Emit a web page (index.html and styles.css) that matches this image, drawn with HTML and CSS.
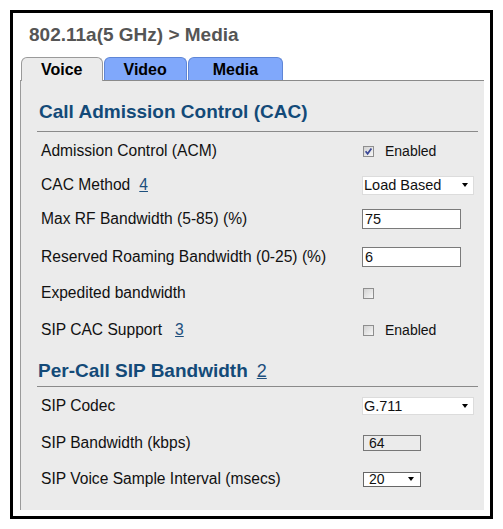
FILE: index.html
```html
<!DOCTYPE html>
<html>
<head>
<meta charset="utf-8">
<link rel="stylesheet" href="styles.css">
</head>
<body>
<div class="frame">
  <h1 class="title">802.11a(5 GHz) &gt; Media</h1>
  <div class="tabs">
    <div class="tab active">Voice</div>
    <div class="tab">Video</div>
    <div class="tab wide">Media</div>
  </div>
  <div class="panel">
    <div class="section-head">Call Admission Control (CAC)</div>
    <div class="grid cac">
      <div class="label">Admission Control (ACM)</div>
      <div class="ctrl">
        <span class="cb"><svg width="9" height="9" viewBox="0 0 9 9"><path d="M1.6 4.2 L3.6 6.8 L7.4 1.4" fill="none" stroke="#3a4796" stroke-width="1.7"/></svg></span>
        <span class="cb-text">Enabled</span>
      </div>

      <div class="label">CAC Method<a class="ref">4</a></div>
      <div class="ctrl"><div class="select">Load Based<span class="arrow"></span></div></div>

      <div class="label">Max RF Bandwidth (5-85) (%)</div>
      <div class="ctrl"><div class="text-input">75</div></div>

      <div class="label">Reserved Roaming Bandwidth (0-25) (%)</div>
      <div class="ctrl"><div class="text-input">6</div></div>

      <div class="label">Expedited bandwidth</div>
      <div class="ctrl"><span class="cb"></span></div>

      <div class="label">SIP CAC Support<a class="ref far">3</a></div>
      <div class="ctrl"><span class="cb"></span><span class="cb-text">Enabled</span></div>
    </div>

    <div class="section-head second">Per-Call SIP Bandwidth<a class="ref big">2</a></div>
    <div class="grid sip">
      <div class="label">SIP Codec</div>
      <div class="ctrl"><div class="select codec">G.711<span class="arrow"></span></div></div>

      <div class="label">SIP Bandwidth (kbps)</div>
      <div class="ctrl"><div class="readonly">64</div></div>

      <div class="label">SIP Voice Sample Interval (msecs)</div>
      <div class="ctrl"><div class="small-select">20<span class="arrow small"></span></div></div>
    </div>
  </div>
</div>
</body>
</html>
```
FILE: styles.css
```css
body {
  margin: 0;
  background: #fff;
  font-family: "Liberation Sans", Arial, sans-serif;
}

.frame {
  margin: 10px;
  width: 483px;
  height: 509px;
  box-sizing: border-box;
  border: 3px solid #000;
  display: flex;
  flex-direction: column;
  padding: 11px 6px 6px 7px;
}

.title {
  margin: 0 0 0 9px;
  font-size: 19px;
  line-height: 22px;
  font-weight: bold;
  color: #555;
}

.tabs {
  display: flex;
  align-items: flex-start;
  margin: 11px 0 -1px 1px;
  position: relative;
  z-index: 1;
}

.tab {
  height: 22px;
  line-height: 23px;
  border: 1px solid #5f86d6;
  border-bottom: none;
  border-radius: 6px 6px 0 0;
  background: #80a8fb;
  padding: 0 19px;
  font-size: 16px;
  font-weight: bold;
  color: #000;
  margin-right: 1px;
}

.tab.active {
  height: 23px;
  background: #ebebeb;
  border-color: #9a9a9a;
}

.tab.wide {
  padding: 0 24px;
}

.panel {
  flex: 1;
  background: #ebebeb;
  border-top: 1px solid #8a8a8a;
  border-left: 1px solid #9a9a9a;
  padding: 20px 6px 0 16px;
}

.section-head {
  font-size: 19px;
  line-height: 22px;
  font-weight: bold;
  color: #134a78;
  padding: 0 0 8px 2px;
  border-bottom: 1px solid #8a8a8a;
}

.section-head.second {
  margin-top: 11px;
  padding: 0 0 4px 1px;
}

.grid {
  display: grid;
  grid-template-columns: 325px 1fr;
}

.cac {
  grid-template-rows: 38px 30px 38px 37px 36px 38px;
}

.sip {
  grid-template-rows: 38px 36px 36px;
}

.label {
  padding-left: 4px;
  font-size: 15.6px;
  color: #111;
  display: flex;
  align-items: center;
}

.ctrl {
  display: flex;
  align-items: center;
  color: #111;
}

.ref {
  color: #1d4f7d;
  text-decoration: underline;
  margin-left: 9px;
}

.ref.far {
  margin-left: 13px;
}

.ref.big {
  font-weight: normal;
  font-size: 18px;
  margin-left: 9px;
}

.cb {
  width: 11px;
  height: 11px;
  box-sizing: border-box;
  border: 1px solid #8e8e8e;
  background: linear-gradient(135deg, #d2d2d2, #f7f7f7);
  margin-left: 1px;
  display: inline-flex;
  align-items: center;
  justify-content: center;
}

.cb-text {
  margin-left: 11px;
  font-size: 14px;
}

.select {
  width: 112px;
  height: 19px;
  box-sizing: border-box;
  border: 1px solid #dcdcdc;
  background: #fff;
  display: flex;
  align-items: center;
  padding-left: 1px;
  font-size: 14.5px;
}

.select.codec {
  height: 18px;
}

.arrow {
  margin-left: auto;
  margin-right: 5px;
  width: 0;
  height: 0;
  border-left: 3.5px solid transparent;
  border-right: 3.5px solid transparent;
  border-top: 4px solid #000;
}

.arrow.small {
  margin-right: 6px;
}

.text-input {
  width: 99px;
  height: 20px;
  box-sizing: border-box;
  border: 1px solid #7a7a7a;
  background: #fff;
  padding-left: 2px;
  font-size: 14.5px;
  display: flex;
  align-items: center;
}

.readonly {
  width: 58px;
  height: 16px;
  box-sizing: border-box;
  margin-left: 1px;
  border: 1px solid #777;
  background: #ebebeb;
  padding-left: 5px;
  font-size: 14px;
  display: flex;
  align-items: center;
}

.small-select {
  width: 58px;
  height: 15px;
  box-sizing: border-box;
  margin-left: 1px;
  border: 1px solid #666;
  background: #fff;
  padding-left: 5px;
  font-size: 14px;
  display: flex;
  align-items: center;
}
```
